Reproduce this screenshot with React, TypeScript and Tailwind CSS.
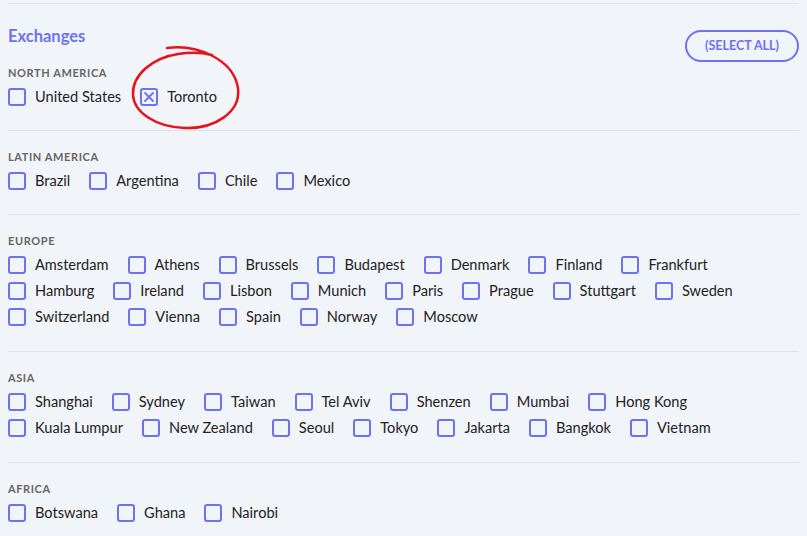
import React from "react";

type Region = {
  name: string;
  rows: string[][];
};

const regions: Region[] = [
  {
    name: "Latin America",
    rows: [["Brazil", "Argentina", "Chile", "Mexico"]],
  },
  {
    name: "Europe",
    rows: [
      ["Amsterdam", "Athens", "Brussels", "Budapest", "Denmark", "Finland", "Frankfurt"],
      ["Hamburg", "Ireland", "Lisbon", "Munich", "Paris", "Prague", "Stuttgart", "Sweden"],
      ["Switzerland", "Vienna", "Spain", "Norway", "Moscow"],
    ],
  },
  {
    name: "Asia",
    rows: [
      ["Shanghai", "Sydney", "Taiwan", "Tel Aviv", "Shenzen", "Mumbai", "Hong Kong"],
      ["Kuala Lumpur", "New Zealand", "Seoul", "Tokyo", "Jakarta", "Bangkok", "Vietnam"],
    ],
  },
  {
    name: "Africa",
    rows: [["Botswana", "Ghana", "Nairobi"]],
  },
];

const Checkbox = ({ label, checked = false }: { label: string; checked?: boolean }) => {
  return (
    <label className="flex items-center gap-[9px] h-[26px] cursor-pointer">
      <span className="w-[18px] h-[18px] rounded-[3px] border-2 border-[#6d72f3] flex items-center justify-center bg-[#f1f4f9]">
        {checked && (
          <svg width="12" height="12" viewBox="0 0 12 12">
            <path d="M2 2 L10 10 M10 2 L2 10" stroke="#6d72f3" strokeWidth="1.8" strokeLinecap="round" />
          </svg>
        )}
      </span>
      <span className="text-[14.6px] text-[#222] leading-none">{label}</span>
    </label>
  );
};

const RegionLabel = ({ children }: { children: React.ReactNode }) => (
  <div className="text-[11px] leading-4 font-bold uppercase tracking-[0.6px] text-[#666] mb-[3px]">
    {children}
  </div>
);

const Row = ({ items }: { items: string[] }) => (
  <div className="flex gap-x-[19px]">
    {items.map((item) => (
      <Checkbox key={item} label={item} />
    ))}
  </div>
);

const App = () => {
  return (
    <div className="relative min-h-[536px] bg-[#f1f4f9] px-2 pt-[3px] font-['Lato','Noto_Sans',sans-serif] overflow-hidden">
      <div className="border-t border-[#dfe3ea] pt-5 pb-5">
        <div className="flex justify-between items-start">
          <h2 className="text-[16.5px] leading-6 font-bold text-[#6d72f3]">Exchanges</h2>
          <button className="mt-[6px] h-8 w-[114px] rounded-full border-2 border-[#6d72f3] text-[12.5px] font-bold text-[#6d72f3]">
            (SELECT ALL)
          </button>
        </div>
        <div className="mt-[3px]">
          <RegionLabel>North America</RegionLabel>
          <div className="flex gap-x-[19px]">
            <Checkbox label="United States" />
            <Checkbox label="Toronto" checked />
          </div>
        </div>
      </div>

      {regions.map((region) => (
        <div
          key={region.name}
          className={`border-t border-[#dfe3ea] pt-[18px] ${region.rows.length > 1 ? "pb-[21px]" : "pb-5"}`}
        >
          <RegionLabel>{region.name}</RegionLabel>
          {region.rows.map((row, i) => (
            <Row key={i} items={row} />
          ))}
        </div>
      ))}

      {/* hand-drawn red ring around the Toronto option */}
      <svg className="absolute left-0 top-0 pointer-events-none" width="807" height="536">
        <path
          d="M167 48 C195 44, 233 58, 238 88 C241 112, 215 129, 185 128 C155 127, 134 112, 133 95 C132 75, 152 58, 178 54 C192 52, 204 53, 212 55"
          fill="none"
          stroke="#e5141b"
          strokeWidth="2.5"
          strokeLinecap="round"
        />
      </svg>
    </div>
  );
};

export default App;
